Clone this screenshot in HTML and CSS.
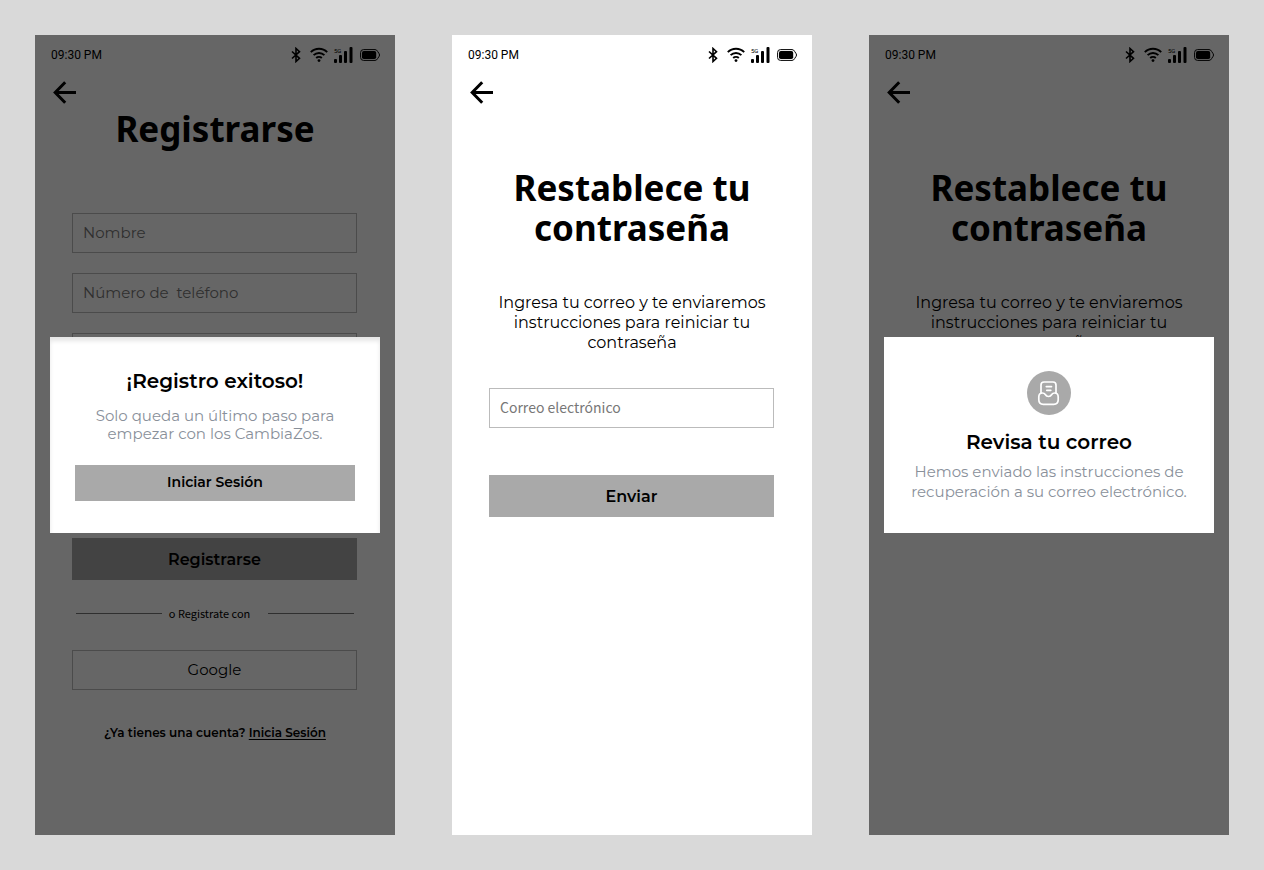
FILE: index.html
```
<!DOCTYPE html>
<html lang="es">
<head>
<meta charset="utf-8">
<meta name="viewport" content="width=device-width, initial-scale=1">
<title>CambiaZos</title>
<link rel="stylesheet" href="styles.css">
</head>
<body>
<svg class="sprite" aria-hidden="true">
  <symbol id="bluetooth" viewBox="0 0 10 16"><path d="M1 4.500 8.500 11.300 5 14.500v-13l3.500 3.200L1 11.500" fill="none" stroke="currentColor" stroke-width="1.600"/></symbol>
  <symbol id="wifi" viewBox="0 0 18 16"><g fill="none" stroke="currentColor" stroke-width="1.900"><path d="M.8 5.200a11.600 11.600 0 0 1 16.400 0"/><path d="M3.600 8.200a7.600 7.600 0 0 1 10.800 0"/><path d="M6.200 11a4 4 0 0 1 5.600 0"/></g><circle cx="9" cy="13.600" r="1.400" fill="currentColor"/></symbol>
  <symbol id="signal" viewBox="0 0 19 16"><g fill="currentColor"><rect x="0" y="12" width="3" height="4" rx="1"/><rect x="5" y="8" width="3" height="8" rx="1"/><rect x="10" y="4" width="3" height="12" rx="1"/><rect x="15.500" y="0" width="3" height="16" rx="1"/></g></symbol>
  <symbol id="battery" viewBox="0 0 20 12"><path d="M3.500.6h11.500q1.800 0 2.600 1.800l1.600 2.400q.6 1.200 0 2.400l-1.600 2.400q-.8 1.800-2.600 1.800H3.500Q.6 11.400.6 8.500v-5Q.6.600 3.500.600Z" fill="none" stroke="currentColor"/><rect x="2" y="1.900" width="14.200" height="8.200" rx="1.800" fill="currentColor"/></symbol>
  <symbol id="back" viewBox="0 0 24 24"><path d="M12.200 2.300 2.200 12.500l10 10.200M2.200 12.500H23" fill="none" stroke="currentColor" stroke-width="3"/></symbol>
  <symbol id="inbox" viewBox="0 0 44 44"><g fill="none" stroke="currentColor" stroke-width="1.700" stroke-linecap="round" stroke-linejoin="round"><path d="M14 22v-8q0-3 3-3h9q3 0 3 3v8"/><path d="M19.300 15.600h5.200M19.800 19.300h4"/><path d="M11.800 26q0-4 3.500-4 2 0 3 1.500 1 2 3.200 2t3.200-2q1-1.500 3-1.500 3.500 0 3.500 4v2.800q0 4.500-4.500 4.500H16.300q-4.500 0-4.500-4.500Z"/></g></symbol>
</svg>
<main class="board">
  <section class="screen">
    <div class="status"><span>09:30 PM</span><div class="status-icons">
      <svg class="icon-bt"><use href="#bluetooth"/></svg><svg class="icon-wifi"><use href="#wifi"/></svg><span class="signal"><svg class="icon-signal"><use href="#signal"/></svg><span class="network">5G</span></span><svg class="icon-battery"><use href="#battery"/></svg></div></div>
    <button class="back" type="button" aria-label="Volver"><svg><use href="#back"/></svg></button>
    <h1 class="title title-high">Registrarse</h1>
    <form class="form register">
      <input class="field" type="text" aria-label="Nombre" placeholder="Nombre">
      <input class="field" type="tel" aria-label="Teléfono" placeholder="Número de &nbsp;teléfono">
      <input class="field" type="email" aria-label="Correo">
      <button class="button register-button" type="button">Registrarse</button>
      <div class="divider"><span>o Registrate con</span></div>
      <button class="button outline" type="button">Google</button>
    </form>
    <p class="account">¿Ya tienes una cuenta? <a href="#">Inicia Sesión</a></p>
    <div class="overlay">
      <div class="dialog shaded" role="dialog" aria-labelledby="success">
        <h2 id="success">¡Registro exitoso!</h2>
        <p class="success-text">Solo queda un último paso para empezar con los CambiaZos.</p>
        <button class="button compact" type="button">Iniciar Sesión</button>
      </div>
    </div>
  </section>
  <section class="screen">
    <div class="status"><span>09:30 PM</span><div class="status-icons">
      <svg class="icon-bt"><use href="#bluetooth"/></svg><svg class="icon-wifi"><use href="#wifi"/></svg><span class="signal"><svg class="icon-signal"><use href="#signal"/></svg><span class="network">5G</span></span><svg class="icon-battery"><use href="#battery"/></svg></div></div>
    <button class="back" type="button" aria-label="Volver"><svg><use href="#back"/></svg></button>
    <h1 class="title">Restablece tu contraseña</h1>
    <p class="intro">Ingresa tu correo y te enviaremos instrucciones para reiniciar tu contraseña</p>
    <form class="form reset">
      <input class="field field-narrow" type="email" aria-label="Correo electrónico" placeholder="Correo electrónico">
      <button class="button" type="button">Enviar</button>
    </form>
  </section>
  <section class="screen">
    <div class="status"><span>09:30 PM</span><div class="status-icons">
      <svg class="icon-bt"><use href="#bluetooth"/></svg><svg class="icon-wifi"><use href="#wifi"/></svg><span class="signal"><svg class="icon-signal"><use href="#signal"/></svg><span class="network">5G</span></span><svg class="icon-battery"><use href="#battery"/></svg></div></div>
    <button class="back" type="button" aria-label="Volver"><svg><use href="#back"/></svg></button>
    <h1 class="title">Restablece tu contraseña</h1>
    <p class="intro">Ingresa tu correo y te enviaremos instrucciones para reiniciar tu contraseña</p>
    <div class="overlay">
      <div class="dialog mail" role="dialog" aria-labelledby="check">
        <svg class="mail-icon"><use href="#inbox"/></svg>
        <h2 id="check">Revisa tu correo</h2>
        <p class="mail-text">Hemos enviado las instrucciones de recuperación a su correo electrónico.</p>
      </div>
    </div>
  </section>
</main>
</body>
</html>
```
FILE: styles.css
```
* { box-sizing: border-box; }
body { margin: 0; background: #d9d9d9; color: #000; font-family: Montserrat, Inter, sans-serif; font-size: 16px; }
h1, h2, p { margin: 0; font-weight: 400; }
button, input { font: inherit; color: inherit; border-radius: 0; }
button { padding: 0; border: 0; cursor: pointer; }
svg { display: block; }
.sprite { position: absolute; width: 0; height: 0; }
.board { display: grid; grid-template-columns: repeat(auto-fit, 360px); justify-content: space-between; gap: 35px; min-height: 100vh; padding: 35px; }
.screen { position: relative; background: #fff; overflow: hidden; }
.status { display: flex; align-items: center; justify-content: space-between; height: 40px; padding: 0 15px 0 16px; font-family: Roboto, sans-serif; font-size: 12px; }
.status-icons { display: flex; align-items: center; gap: 7px; }
.icon-bt { width: 10px; height: 16px; margin-right: 2px; }
.icon-wifi { width: 18px; height: 16px; margin-right: -1px; }
.icon-signal { width: 19px; height: 16px; }
.icon-battery { width: 20px; height: 12px; }
.signal { position: relative; }
.network { position: absolute; left: 0; top: 1px; font-size: 6px; line-height: 6px; }
.back { display: block; margin: 5px 0 0 18px; background: none; }
.back svg { width: 24px; height: 24px; }
.title { margin: 64px 40px 0; font-family: "Noto Sans", sans-serif; font-size: 35px; line-height: 40px; font-weight: 700; text-align: center; }
.title-high { margin-top: 5px; }
.intro { margin: 45px 40px 0; line-height: 20px; text-align: center; }
.form { display: flex; flex-direction: column; margin: 0 38px 0 37px; }
.register { gap: 20px; margin-top: 64px; }
.reset { gap: 47px; margin-top: 35px; }
.field { width: 100%; height: 40px; padding: 0 10px 2px; border: 1px solid #bbb; background: #fff; font-size: 15px; }
.field::placeholder { color: #777; opacity: 1; }
.field-narrow { font-family: "Noto Sans CJK SC", "Noto Sans", sans-serif; font-size: 14px; }
.button { height: 42px; background: #a9a9a9; font-weight: 600; }
.register-button { margin-top: 145px; }
.outline { height: 40px; margin-top: 6px; padding-bottom: 2px; border: 1px solid #bbb; background: none; font-size: 15px; font-weight: 400; }
.divider { display: flex; align-items: center; gap: 7px; height: 26px; margin: 0 3px -2px 4px; font-family: "Noto Sans CJK SC", "Noto Sans", sans-serif; font-size: 11px; }
.divider::before, .divider::after { content: ""; flex: 1; height: 1px; background: #777; }
.divider::after { margin-left: 11px; }
.account { margin-top: 34px; font-size: 12px; line-height: 18px; font-weight: 600; text-align: center; }
.account a { color: inherit; text-underline-offset: 2px; }
.overlay { position: absolute; inset: 0; display: flex; align-items: center; justify-content: center; padding: 15px; background: rgba(0, 0, 0, .6); }
.dialog { display: flex; flex-direction: column; align-items: center; width: 100%; padding: 32px 25px; background: #fff; text-align: center; }
.dialog h2 { font-size: 20px; line-height: 24px; font-weight: 600; }
.dialog p { color: #89909a; font-size: 15px; }
.shaded { box-shadow: inset 0 4px 4px rgba(0, 0, 0, .1); }
.success-text { margin-top: 14px; line-height: 18px; }
.compact { width: 100%; height: 36px; margin-top: 22px; padding-bottom: 2px; font-size: 14px; }
.mail { padding: 34px 20px 31px; }
.mail-icon { width: 44px; height: 44px; border-radius: 50%; background: #a9a9a9; color: #fff; }
.mail h2 { margin-top: 15px; }
.mail-text { margin-top: 8px; line-height: 20px; }
```
